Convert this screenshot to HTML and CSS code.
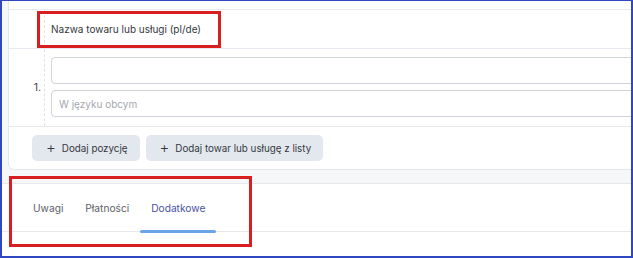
FILE: index.html
```html
<!DOCTYPE html>
<html lang="pl">
<head>
<meta charset="UTF-8">
<meta name="viewport" content="width=device-width, initial-scale=1.0">
<title>Pozycje faktury</title>
<link rel="stylesheet" href="styles.css">
</head>
<body>
<div class="frame">
<!-- Items card -->
<section class="card">
<div class="card-top"></div>
<div class="line head">
<div class="num"></div>
<div class="cell name">Nazwa towaru lub usługi (pl/de)</div>
</div>
<div class="line item">
<div class="num">1.</div>
<div class="cell fields">
<input type="text" class="field">
<input type="text" class="field" placeholder="W języku obcym">
</div>
</div>
<div class="actions">
<button class="add-btn"><span class="plus">+</span>Dodaj pozycję</button>
<button class="add-btn"><span class="plus">+</span>Dodaj towar lub usługę z listy</button>
</div>
</section>

<!-- Tabs -->
<section class="tabs">
<nav class="tab-list">
<a class="tab">Uwagi</a>
<a class="tab">Płatności</a>
<a class="tab active">Dodatkowe</a>
</nav>
</section>

<!-- Highlight marks -->
<div class="mark mark-head"></div>
<div class="mark mark-tabs"></div>
</div>
</body>
</html>
```

FILE: styles.css
```css
body {
margin: 0;
padding: 0;
font-family: Inter, "Noto Sans", sans-serif;
color: #3b3f46;
background-color: #ffffff;
}
.frame {
position: relative;
width: 633px;
height: 258px;
box-sizing: border-box;
border: 2px solid #3047c2;
border-top-width: 1px;
background-color: #f6f7f9;
overflow: hidden;
display: flex;
flex-direction: column;
}

/* card */
.card {
margin-left: 6px;
margin-right: -20px;
background-color: #fff;
border: 1px solid #e3e6ea;
border-top: none;
border-radius: 0 0 0 6px;
}
.card-top {
height: 8px;
border-bottom: 1px solid #e9eaee;
}
.line {
display: flex;
border-bottom: 1px solid #e8eaf1;
}
.head {
height: 38px;
}
.item {
border-bottom-color: #e6e8eb;
}
.num {
width: 32px;
padding-right: 3px;
border-right: 1px dashed #dfe2e8;
display: flex;
align-items: center;
justify-content: flex-end;
font-size: 10.5px;
color: #3f434a;
}
.cell {
flex: 1;
padding-left: 6px;
}
.name {
display: flex;
align-items: center;
font-size: 10px;
color: #34383e;
}
.fields {
display: flex;
flex-direction: column;
gap: 6px;
padding-top: 8px;
padding-bottom: 9px;
}
.field {
height: 27px;
box-sizing: border-box;
margin: 0;
padding: 0 7px;
border: 1px solid #cfd4da;
border-radius: 4px;
font-family: inherit;
font-size: 10px;
color: #333;
outline: none;
}
.field::placeholder {
color: #a3a7ad;
}
.actions {
display: flex;
gap: 6px;
padding: 8px 0 8px 23px;
}
.add-btn {
height: 26px;
display: flex;
align-items: center;
padding: 0 12px 0 14px;
border: none;
border-radius: 5px;
background-color: #e3e8ee;
font-family: inherit;
font-size: 9.8px;
color: #353940;
cursor: pointer;
}
.plus {
font-size: 15px;
font-weight: 300;
margin-right: 6px;
line-height: 1;
position: relative;
top: -1px;
}

/* tabs */
.tabs {
margin-top: 13px;
flex: 1;
background-color: #fff;
border-top: 1px solid #e6e8ec;
}
.tab-list {
display: flex;
height: 47px;
padding-left: 20px;
border-bottom: 1px solid #e6e8ec;
}
.tab {
position: relative;
display: flex;
align-items: center;
padding: 0 11px;
font-size: 10.2px;
color: #5b6068;
cursor: pointer;
}
.tab.active {
color: #4751a3;
}
.tab.active::after {
content: "";
position: absolute;
left: 0;
right: 0;
bottom: -2px;
height: 3px;
border-radius: 2px;
background-color: #6ba5e7;
}

/* red highlight boxes */
.mark {
position: absolute;
border: 3px solid #d81e1e;
box-sizing: border-box;
}
.mark-head {
left: 35px;
top: 10px;
width: 184px;
height: 37px;
}
.mark-tabs {
left: 7px;
top: 175px;
width: 243px;
height: 71px;
}
```
